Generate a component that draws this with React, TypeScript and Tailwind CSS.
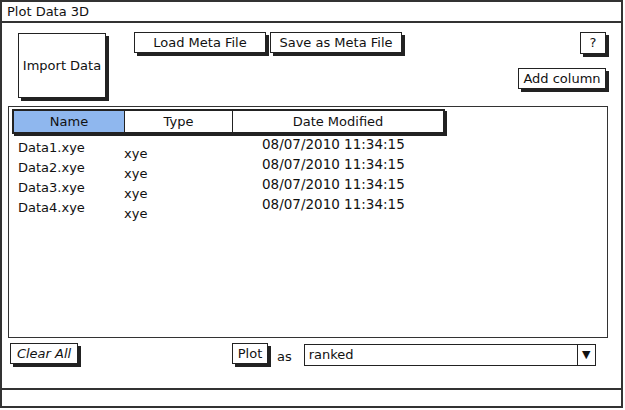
const font = { fontFamily: '"DejaVu Sans", "Liberation Sans", sans-serif' };

function SketchButton({
  children,
  className = "",
}: {
  children: React.ReactNode;
  className?: string;
}) {
  return (
    <div
      className={`flex items-center justify-center border-[1.5px] border-[#222] bg-white shadow-[3px_3px_0_#222] text-[13px] text-[#111] ${className}`}
    >
      {children}
    </div>
  );
}

const rows = [
  { name: "Data1.xye", type: "xye", date: "08/07/2010 11:34:15" },
  { name: "Data2.xye", type: "xye", date: "08/07/2010 11:34:15" },
  { name: "Data3.xye", type: "xye", date: "08/07/2010 11:34:15" },
  { name: "Data4.xye", type: "xye", date: "08/07/2010 11:34:15" },
];

export default function App() {
  return (
    <div className="w-[625px] h-[410px] bg-white text-[#111]" style={font}>
      {/* window frame */}
      <div className="w-[623px] h-[388px] border-2 border-b-0 border-[#333] flex flex-col">
        <div className="h-[21px] border-b-2 border-[#333] flex items-center pl-[5px] text-[13px]">
          Plot Data 3D
        </div>

        <div className="flex-1 flex flex-col pl-[6px] pr-[13px]">
          {/* toolbar */}
          <div className="h-[83px] flex pt-[10px]">
            <SketchButton className="ml-[10px] w-[88px] h-[65px]">Import Data</SketchButton>
            <SketchButton className="ml-[28px] w-[132px] h-[21px] -mt-[1px]">Load Meta File</SketchButton>
            <SketchButton className="ml-[4px] w-[132px] h-[21px] -mt-[1px]">Save as Meta File</SketchButton>
            <div className="flex-1 flex flex-col items-end pr-[2px]">
              <SketchButton className="w-[26px] h-[22px] -mt-[1px]">?</SketchButton>
              <SketchButton className="mt-[14px] w-[88px] h-[21px]">Add column</SketchButton>
            </div>
          </div>

          {/* file table */}
          <div className="w-[600px] h-[232px] border-[1.5px] border-[#333] pt-[2px] pl-[3px]">
            <div className="flex w-[433px] h-[25px] border-2 border-[#222] shadow-[2px_2px_0_#222] text-[13px]">
              <div className="w-[111px] bg-[#8fb7ee] border-r-[1.5px] border-[#222] flex items-center justify-center">
                Name
              </div>
              <div className="w-[108px] border-r-[1.5px] border-[#222] flex items-center justify-center">
                Type
              </div>
              <div className="flex-1 flex items-center justify-center">Date Modified</div>
            </div>
            <div className="flex text-[13px]">
              <div className="w-[112px] pl-[6px] pt-[4px] leading-[20px]">
                {rows.map((r) => (
                  <div key={r.name}>{r.name}</div>
                ))}
              </div>
              <div className="w-[138px] pt-[10px] leading-[20px]">
                {rows.map((r) => (
                  <div key={r.name}>{r.type}</div>
                ))}
              </div>
              <div className="pt-0 leading-[20px] text-[13.5px]">
                {rows.map((r) => (
                  <div key={r.name}>{r.date}</div>
                ))}
              </div>
            </div>
          </div>

          {/* bottom controls */}
          <div className="flex items-start mt-[5px] h-[24px]">
            <SketchButton className="ml-[2px] w-[68px] h-[21px] italic text-[12px]">Clear All</SketchButton>
            <SketchButton className="ml-[154px] w-[36px] h-[21px]">Plot</SketchButton>
            <div className="ml-[9px] mt-[4px] text-[13px]">as</div>
            <div className="ml-[12px] mt-[1px] w-[292px] h-[22px] border-[1.5px] border-[#222] flex">
              <div className="flex-1 flex items-center pl-[4px] text-[13px]">ranked</div>
              <div className="w-[18px] border-l-[1.5px] border-[#222] flex items-center justify-center text-[11px]">
                ▼
              </div>
            </div>
          </div>
        </div>
      </div>
      {/* status bar */}
      <div className="w-[623px] h-[20px] border-2 border-[#333]" />
    </div>
  );
}
